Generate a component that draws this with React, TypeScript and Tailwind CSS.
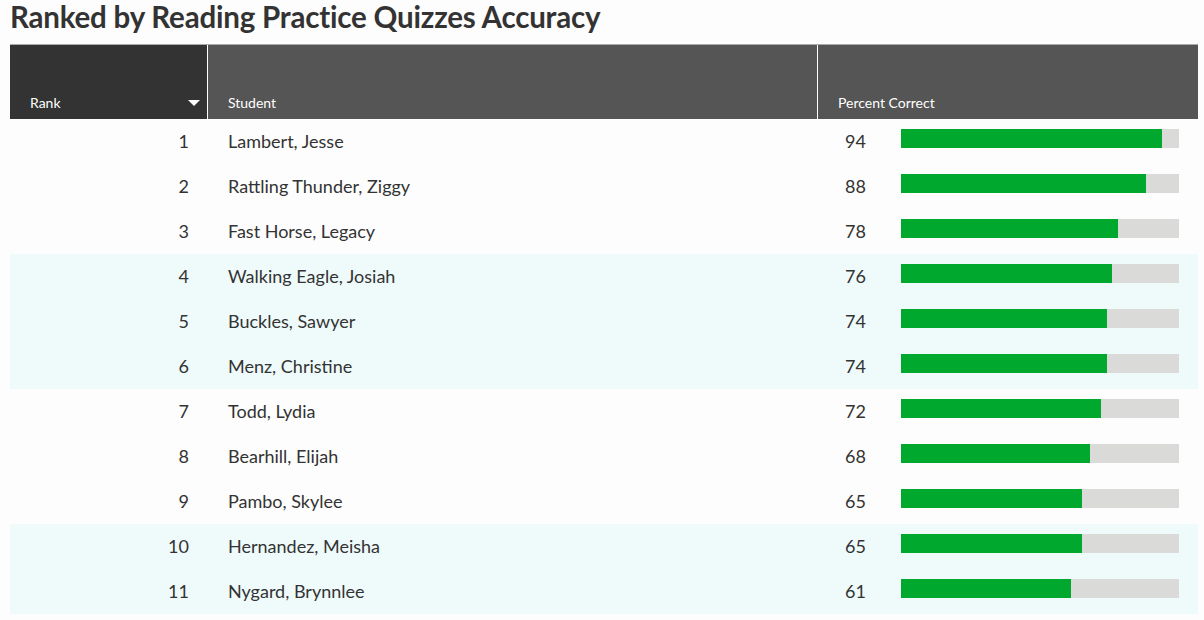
import React from 'react';

interface Row {
  rank: number;
  name: string;
  pct: number;
}

const rows: Row[] = [
  { rank: 1, name: 'Lambert, Jesse', pct: 94 },
  { rank: 2, name: 'Rattling Thunder, Ziggy', pct: 88 },
  { rank: 3, name: 'Fast Horse, Legacy', pct: 78 },
  { rank: 4, name: 'Walking Eagle, Josiah', pct: 76 },
  { rank: 5, name: 'Buckles, Sawyer', pct: 74 },
  { rank: 6, name: 'Menz, Christine', pct: 74 },
  { rank: 7, name: 'Todd, Lydia', pct: 72 },
  { rank: 8, name: 'Bearhill, Elijah', pct: 68 },
  { rank: 9, name: 'Pambo, Skylee', pct: 65 },
  { rank: 10, name: 'Hernandez, Meisha', pct: 65 },
  { rank: 11, name: 'Nygard, Brynnlee', pct: 61 },
];

export default function App() {
  return (
    <div className="h-[620px] w-[1204px] overflow-hidden bg-[#fdfdfd] font-['Lato','Liberation_Sans',sans-serif] text-[#333]">
      <h1 className="h-[44px] px-[10px] pt-[2px] text-[29.5px] font-bold leading-[30px] tracking-[-0.2px] text-[#333]">
        Ranked by Reading Practice Quizzes Accuracy
      </h1>
      <div className="ml-[10px] w-[1188px]">
        <div className="flex h-[75px] border-t border-[#aaa] text-[14px] text-white">
          <div className="flex w-[197px] items-end justify-between bg-[#333] pb-[6px] pl-[20px] pr-[7px]">
            <span>Rank</span>
            <svg width="12" height="7" viewBox="0 0 12 7" className="mb-[6px]">
              <path d="M0 0h12L6 6z" fill="#fff" />
            </svg>
          </div>
          <div className="flex w-[610px] items-end border-l border-white bg-[#555] pb-[6px] pl-[20px]">Student</div>
          <div className="flex flex-1 items-end border-l border-white bg-[#555] pb-[6px] pl-[20px]">Percent Correct</div>
        </div>
        {rows.map((r, i) => (
          <div
            key={r.rank}
            className={`flex h-[45px] items-center text-[18px] ${Math.floor(i / 3) % 2 === 1 ? 'bg-[#effafb]' : ''}`}
          >
            <div className="w-[179px] text-right">{r.rank}</div>
            <div className="w-[639px] pl-[39px]">{r.name}</div>
            <div className="w-[73px] pl-[17px]">{r.pct}</div>
            <div className="mb-[7px] h-[19px] w-[278px] bg-[#dadbd8]">
              <div className="h-full bg-[#00a82d]" style={{ width: `${r.pct}%` }} />
            </div>
          </div>
        ))}
      </div>
    </div>
  );
}
